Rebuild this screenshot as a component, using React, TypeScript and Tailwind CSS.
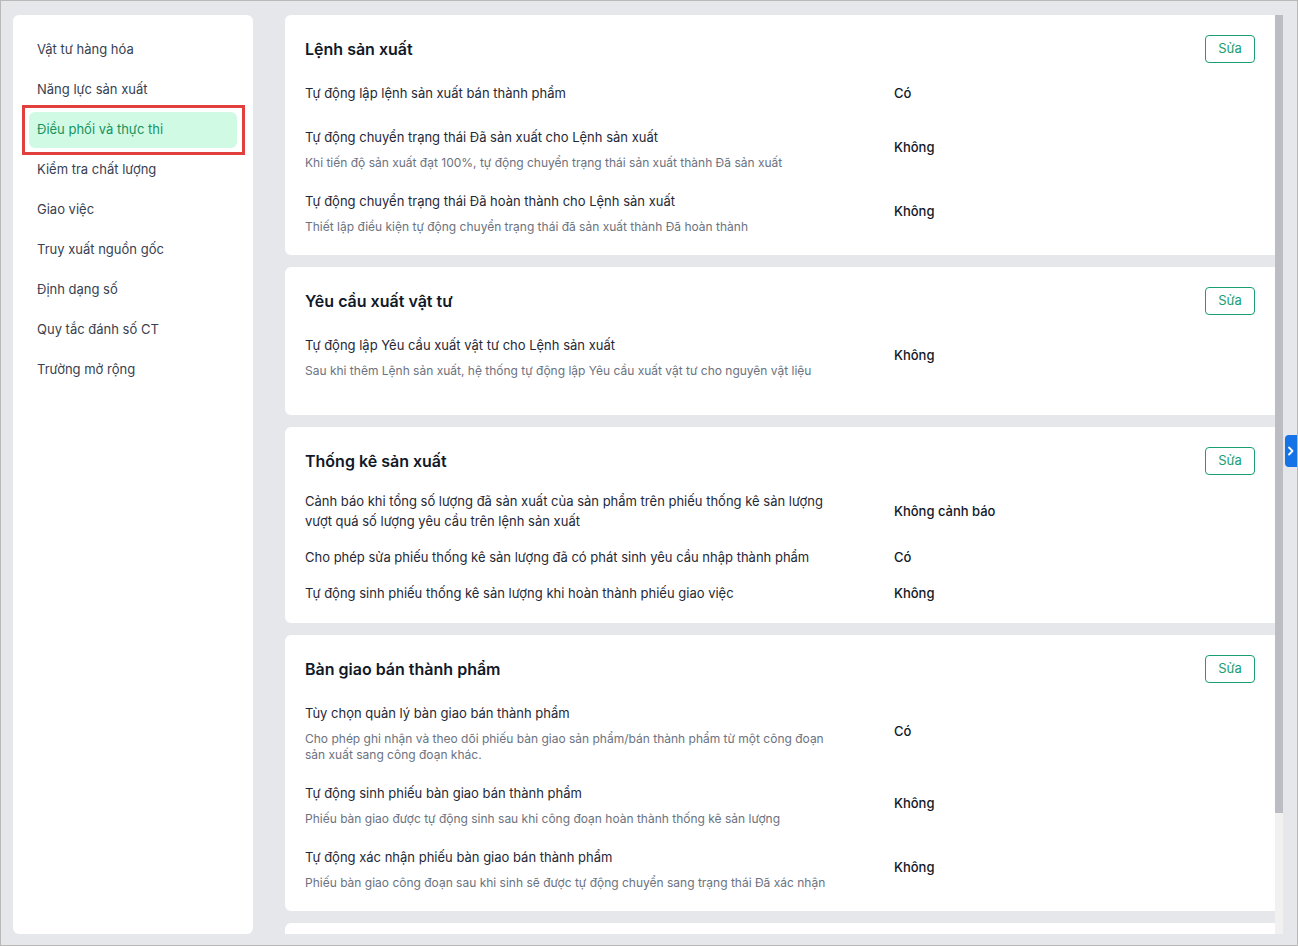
import React from "react";

type Row = {
  label: string;
  desc?: string;
  value: string;
  extra?: string;
};

type Section = {
  title: string;
  rows: Row[];
  rowsClass: string;
  cardClass: string;
};

const menu = [
  "Vật tư hàng hóa",
  "Năng lực sản xuất",
  "Điều phối và thực thi",
  "Kiểm tra chất lượng",
  "Giao việc",
  "Truy xuất nguồn gốc",
  "Định dạng số",
  "Quy tắc đánh số CT",
  "Trường mở rộng",
];

const sections: Section[] = [
  {
    title: "Lệnh sản xuất",
    rowsClass: "mt-[22px] gap-5",
    cardClass: "pb-5",
    rows: [
      { label: "Tự động lập lệnh sản xuất bán thành phẩm", value: "Có", extra: "mb-1" },
      {
        label: "Tự động chuyển trạng thái Đã sản xuất cho Lệnh sản xuất",
        desc: "Khi tiến độ sản xuất đạt 100%, tự động chuyển trạng thái sản xuất thành Đã sản xuất",
        value: "Không",
      },
      {
        label: "Tự động chuyển trạng thái Đã hoàn thành cho Lệnh sản xuất",
        desc: "Thiết lập điều kiện tự động chuyển trạng thái đã sản xuất thành Đã hoàn thành",
        value: "Không",
      },
    ],
  },
  {
    title: "Yêu cầu xuất vật tư",
    rowsClass: "mt-[22px] gap-5",
    cardClass: "pb-[36px]",
    rows: [
      {
        label: "Tự động lập Yêu cầu xuất vật tư cho Lệnh sản xuất",
        desc: "Sau khi thêm Lệnh sản xuất, hệ thống tự động lập Yêu cầu xuất vật tư cho nguyên vật liệu",
        value: "Không",
      },
    ],
  },
  {
    title: "Thống kê sản xuất",
    rowsClass: "mt-[18px] gap-4",
    cardClass: "pb-5",
    rows: [
      {
        label:
          "Cảnh báo khi tổng số lượng đã sản xuất của sản phẩm trên phiếu thống kê sản lượng vượt quá số lượng yêu cầu trên lệnh sản xuất",
        value: "Không cảnh báo",
      },
      {
        label: "Cho phép sửa phiếu thống kê sản lượng đã có phát sinh yêu cầu nhập thành phẩm",
        value: "Có",
      },
      {
        label: "Tự động sinh phiếu thống kê sản lượng khi hoàn thành phiếu giao việc",
        value: "Không",
      },
    ],
  },
  {
    title: "Bàn giao bán thành phẩm",
    rowsClass: "mt-[22px] gap-5",
    cardClass: "pb-5",
    rows: [
      {
        label: "Tùy chọn quản lý bàn giao bán thành phẩm",
        desc: "Cho phép ghi nhận và theo dõi phiếu bàn giao sản phẩm/bán thành phẩm từ một công đoạn sản xuất sang công đoạn khác.",
        value: "Có",
      },
      {
        label: "Tự động sinh phiếu bàn giao bán thành phẩm",
        desc: "Phiếu bàn giao được tự động sinh sau khi công đoạn hoàn thành thống kê sản lượng",
        value: "Không",
      },
      {
        label: "Tự động xác nhận phiếu bàn giao bán thành phẩm",
        desc: "Phiếu bàn giao công đoạn sau khi sinh sẽ được tự động chuyển sang trạng thái Đã xác nhận",
        value: "Không",
      },
    ],
  },
];

const Card = ({ section }: { section: Section }) => (
  <div className={`bg-white rounded-l-md px-5 pt-[22px] ${section.cardClass}`}>
    <div className="flex items-center justify-between h-6">
      <h2 className="text-[16px] leading-6 font-semibold text-[#111827]">{section.title}</h2>
      <button className="w-[50px] h-7 border border-[#1a9d72] rounded-[4px] text-[13px] text-[#1a9d72] bg-white">
        Sửa
      </button>
    </div>
    <div className={`flex flex-col ${section.rowsClass}`}>
      {section.rows.map((row, i) => (
        <div key={i} className={`flex items-center ${row.extra ?? ""}`}>
          <div className="w-[589px] pr-[60px]">
            <div className="text-[13px] leading-5 text-[#1f2937]">{row.label}</div>
            {row.desc && (
              <div className="mt-2 text-[12px] leading-4 text-[#6b7280]">{row.desc}</div>
            )}
          </div>
          <div className={`flex-1 text-[13px] leading-5 font-medium text-[#111827] ${row.desc ? "mb-1" : ""}`}>
            {row.value}
          </div>
        </div>
      ))}
    </div>
  </div>
);

export default function App() {
  return (
    <div
      className="relative flex w-[1298px] h-[946px] border border-[#b9b9b9] bg-[#e5e7eb] pl-3 pr-[14px] pt-[14px] pb-[11px] gap-8 overflow-hidden"
      style={{ fontFamily: "Inter, 'Noto Sans', sans-serif" }}
    >
      <aside className="w-[240px] shrink-0 bg-white rounded-md px-4 pt-[17px]">
        <nav className="flex flex-col gap-1">
          {menu.map((item) =>
            item === "Điều phối và thực thi" ? (
              <div key={item} className="relative">
                <div className="h-9 px-2 flex items-center rounded-md bg-[#d1fae5] text-[13px] text-[#15935f]">
                  {item}
                </div>
                <div className="absolute -left-[7px] -top-[7px] -bottom-[7px] -right-[8px] border-[3px] border-[#e2403c]" />
              </div>
            ) : (
              <div key={item} className="h-9 px-2 flex items-center text-[13px] text-[#374151]">
                {item}
              </div>
            )
          )}
        </nav>
      </aside>

      <main className="flex-1 flex min-w-0">
        <div className="flex-1 min-w-0 overflow-hidden">
          <div className="flex flex-col gap-3">
            {sections.map((s) => (
              <Card key={s.title} section={s} />
            ))}
            <div className="bg-white rounded-l-md h-[150px] shrink-0" />
          </div>
        </div>
        <div className="w-2 flex flex-col bg-[#f1f1f1]">
          <div className="h-[798px] bg-[#bbbdc2]" />
        </div>
      </main>

      <div className="absolute right-0 top-[434px] w-3 h-8 bg-[#1673e6] rounded-l-[4px] flex items-center justify-center">
        <svg width="8" height="10" viewBox="0 0 8 10" fill="none">
          <path d="M2 1.5 L5.5 5 L2 8.5" stroke="white" strokeWidth="1.8" strokeLinecap="round" strokeLinejoin="round" />
        </svg>
      </div>
    </div>
  );
}
